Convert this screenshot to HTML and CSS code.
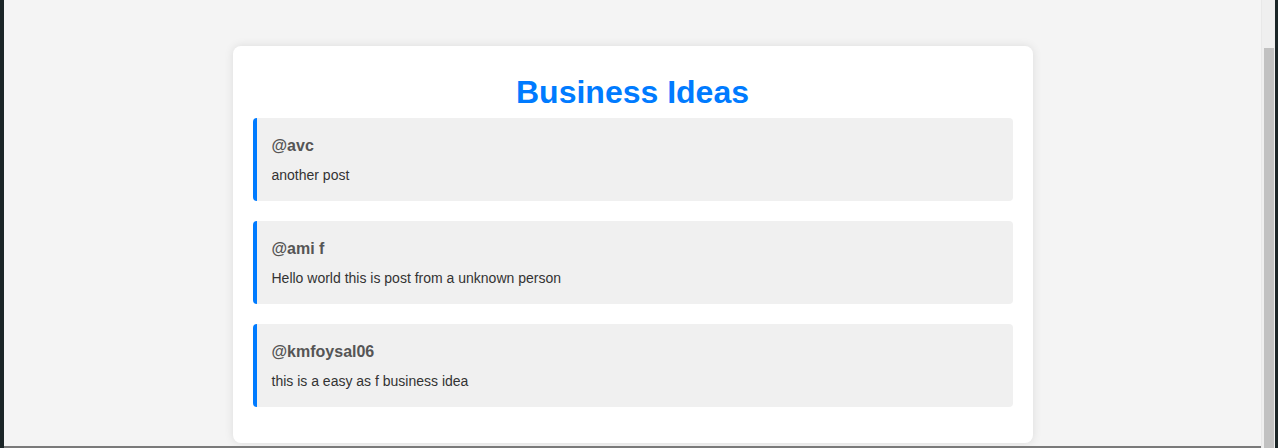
FILE: index.html
```html
<!DOCTYPE html>
<html lang="en">
<head>
  <meta charset="UTF-8" />
  <meta name="viewport" content="width=device-width, initial-scale=1.0" />
  <title>Business Ideas</title>
  <link rel="stylesheet" href="styles.css">
</head>
<body>
  <div class="frameLeft"></div>

  <div class="viewport">
    <div class="page">
      <div id="ideasBox">
        <h1>Business Ideas</h1>

        <div class="post">
          <h3>@avc</h3>
          <p>another post</p>
        </div>

        <div class="post">
          <h3>@ami f</h3>
          <p>Hello world this is post from a unknown person</p>
        </div>

        <div class="post">
          <h3>@kmfoysal06</h3>
          <p>this is a easy as f business idea</p>
        </div>
      </div>
    </div>
    <div class="frameBottom"></div>
  </div>

  <div class="scrollbar">
    <div class="thumb"></div>
  </div>

  <div class="frameRight"></div>
</body>
</html>
```

FILE: styles.css
```css
html, body {
  height: 100%;
}

body {
  font-family: Arial, "Liberation Sans", sans-serif;
  display: flex;
  margin: 0;
  overflow: hidden;
  background-color: #f4f4f4;
}

.frameLeft {
  width: 4px;
  background-color: #1b2527;
}

.frameRight {
  width: 3px;
  background-color: #1b2527;
}

.viewport {
  flex: 1;
  display: flex;
  flex-direction: column;
  min-width: 0;
}

.page {
  flex: 1;
  overflow: hidden;
  padding-top: 46px;
}

.frameBottom {
  height: 2px;
  background-color: #7a7a7a;
}

.scrollbar {
  width: 14px;
  background-color: #efefef;
  border-left: 1px solid #e8e8e8;
  box-sizing: border-box;
  padding: 48px 1px 0 2px;
}

.thumb {
  height: 100%;
  background-color: #c1c1c1;
}

#ideasBox {
  width: 800px;
  margin: 0 auto;
  background-color: #ffffff;
  border-radius: 8px;
  box-shadow: 0 0 10px rgba(0, 0, 0, 0.1);
  padding: 28px 20px 36px;
  box-sizing: border-box;
}

h1 {
  color: #007bff;
  font-size: 32px;
  line-height: 37px;
  text-align: center;
  margin: 0 0 7px;
}

.post {
  background-color: #f0f0f0;
  border-left: 4px solid #007bff;
  border-radius: 4px;
  padding: 19px 15px 18px;
  margin-bottom: 20px;
}

.post:last-child {
  margin-bottom: 0;
}

.post h3 {
  font-size: 16px;
  line-height: 18px;
  color: #555;
  margin: 0 0 12px;
}

.post p {
  font-size: 14px;
  line-height: 16px;
  color: #333;
  margin: 0;
}
```
